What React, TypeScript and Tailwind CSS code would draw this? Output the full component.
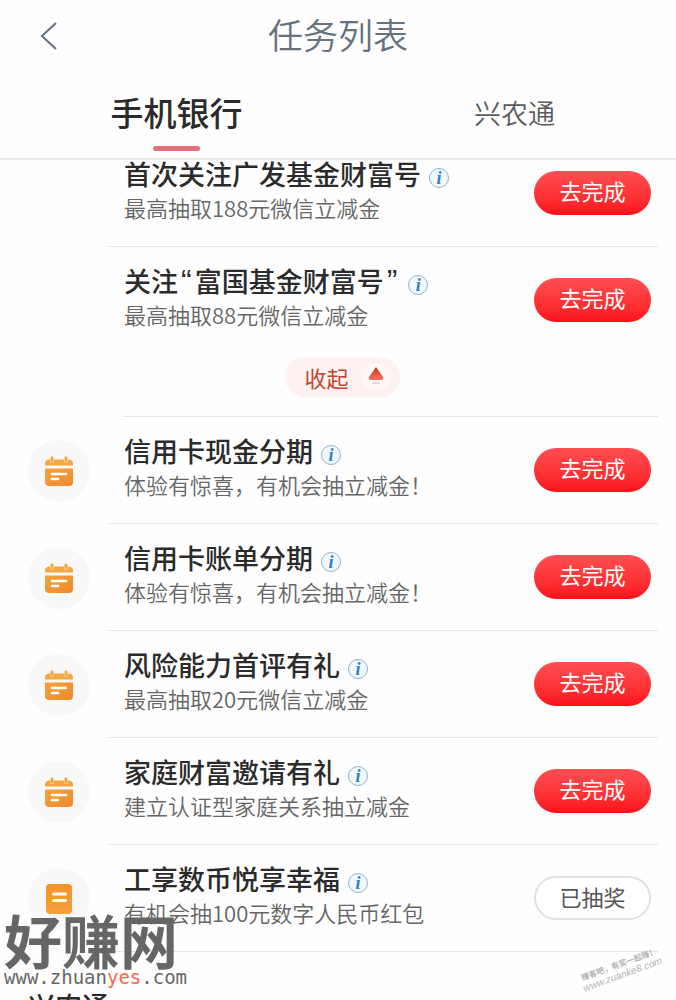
// Task list screen: header, tabs and the scrolling list of reward tasks.

interface Task {
  title: string
  desc: string
  icon?: 'calendar' | 'note'
  done?: boolean
}

const followTasks: Task[] = [
  { title: '首次关注广发基金财富号', desc: '最高抽取188元微信立减金' },
  { title: '关注“富国基金财富号”', desc: '最高抽取88元微信立减金' },
]

const tasks: Task[] = [
  { title: '信用卡现金分期', desc: '体验有惊喜，有机会抽立减金！', icon: 'calendar' },
  { title: '信用卡账单分期', desc: '体验有惊喜，有机会抽立减金！', icon: 'calendar' },
  { title: '风险能力首评有礼', desc: '最高抽取20元微信立减金', icon: 'calendar' },
  { title: '家庭财富邀请有礼', desc: '建立认证型家庭关系抽立减金', icon: 'calendar' },
  { title: '工享数币悦享幸福', desc: '有机会抽100元数字人民币红包', icon: 'note', done: true },
]

function CalendarIcon() {
  return (
    <svg width="30" height="30" viewBox="0 0 30 30" aria-hidden="true">
      <defs>
        <linearGradient id="cal" x1="0" y1="0" x2="1" y2="1">
          <stop offset="0" stopColor="#f6a23c" />
          <stop offset="1" stopColor="#ec8a2b" />
        </linearGradient>
      </defs>
      <path d="M1 9.500V8q0-4.500 4.500-4.500h19Q29 3.500 29 8v1.500z" fill="#f5a541" />
      <path d="M8 2v3M22 2v3" stroke="#fbdcae" strokeWidth="4" strokeLinecap="round" />
      <path d="M8 2v3M22 2v3" stroke="#f5a541" strokeWidth="2.500" strokeLinecap="round" />
      <path d="M1 12.500h28V26q0 4-4 4H5q-4 0-4-4z" fill="url(#cal)" />
      <path d="M8 18h14M8 23h6" stroke="#fff" strokeWidth="2.600" strokeLinecap="round" />
    </svg>
  )
}

function NoteIcon() {
  return (
    <svg width="28" height="30" viewBox="0 0 28 30" aria-hidden="true">
      <defs>
        <linearGradient id="note" x1="0" y1="0" x2="0" y2="1">
          <stop offset="0" stopColor="#f09328" />
          <stop offset="1" stopColor="#f7a13f" />
        </linearGradient>
      </defs>
      <rect x="1" y="0" width="26" height="30" rx="4" fill="url(#note)" />
      <path d="M8.500 10h12M8.500 16.500h12" stroke="#fff" strokeWidth="3" strokeLinecap="round" />
    </svg>
  )
}

function InfoButton({ title }: { title: string }) {
  return (
    <button
      type="button"
      aria-label={`${title} 说明`}
      className="mt-2 ml-2 flex size-5 shrink-0 items-center justify-center rounded-full border border-[#8fb4cf] bg-[#f1f9fe] font-['Liberation_Serif',serif] text-[18px] leading-none font-bold text-[#2f7fc2] italic"
    >
      i
    </button>
  )
}

// Curly quotes come out full width in the CJK face, so they get a Latin one.
function Title({ text }: { text: string }) {
  return (
    <h2 className="text-[27px] leading-[38px] font-medium whitespace-nowrap text-[#2b2b2b]">
      {text.split(/([“”])/).map((part, i) =>
        part === '“' || part === '”' ? (
          <span key={i} className="px-[3px] font-['Liberation_Sans',sans-serif] text-[32px] leading-none font-normal">
            {part}
          </span>
        ) : (
          part
        ),
      )}
    </h2>
  )
}

function TaskRow({ task, last = false }: { task: Task; last?: boolean }) {
  return (
    <li className="flex pr-[18px]">
      <div className="flex w-[109px] shrink-0 items-center pl-7">
        {task.icon && (
          <span className="flex size-[62px] items-center justify-center rounded-full bg-[#f8f8f8]">
            {task.icon === 'calendar' ? <CalendarIcon /> : <NoteIcon />}
          </span>
        )}
      </div>
      <div
        className={`flex min-w-0 flex-1 items-center justify-between border-b pr-[7px] pl-[15px] ${
          last ? 'border-transparent' : 'border-[#e4e4e4]'
        }`}
      >
        <div className="pt-[15px] pb-[25px]">
          <div className="flex items-center">
            <Title text={task.title} />
            <InfoButton title={task.title} />
          </div>
          <p className="text-[22px] leading-7 font-[350] whitespace-nowrap text-[#666]">{task.desc}</p>
        </div>
        {task.done ? (
          <button
            type="button"
            className="h-11 w-[117px] shrink-0 rounded-full border-2 border-[#e2e2e2] bg-white pb-1 text-[22px] text-[#555]"
          >
            已抽奖
          </button>
        ) : (
          <button
            type="button"
            className="h-11 w-[117px] shrink-0 rounded-full bg-linear-to-b from-[#ff4d52] to-[#fb0d18] pb-1.5 text-[22px] text-white"
          >
            去完成
          </button>
        )}
      </div>
    </li>
  )
}

export default function App() {
  return (
    <div className="relative flex h-screen flex-col overflow-hidden bg-[#fefefe] font-['Noto_Sans_CJK_SC',sans-serif]">
      <header className="grid h-[72px] shrink-0 grid-cols-[1fr_auto_1fr] items-center">
        <button type="button" aria-label="返回" className="ml-10 w-fit">
          <svg width="18" height="30" viewBox="0 0 18 30" fill="none" stroke="#65727e" strokeWidth="2">
            <path d="M16 2L2 15l14 13" />
          </svg>
        </button>
        <h1 className="pb-1 text-[35px] leading-[68px] font-[350] text-[#66727e]">任务列表</h1>
      </header>

      <nav className="grid h-[88px] shrink-0 grid-cols-2 border-b-2 border-[#e9e9e9] pl-2.5">
        <button type="button" className="flex flex-col items-center pt-4 text-[33px] leading-[48px] font-medium text-[#2b2b2b]">
          手机银行
          <span className="mt-2.5 h-[5px] w-[47px] rounded-full bg-[#e4717a]" />
        </button>
        <button type="button" className="flex flex-col items-center pt-4 pl-2.5 text-[27px] leading-[50px] font-[350] text-[#5c5c5c]">
          兴农通
        </button>
      </nav>

      <main className="flex-1 overflow-hidden">
        <ul className="-mt-5">
          {followTasks.map((task, i) => (
            <TaskRow key={task.title} task={task} last={i === followTasks.length - 1} />
          ))}
        </ul>
        <div className="mr-[18px] ml-[123px] border-b border-[#e4e4e4]">
          <div className="flex justify-center pt-[3px] pr-[97px] pb-[19px]">
            <button
              type="button"
              className="flex h-10 w-[115px] items-center justify-between rounded-full bg-[#fdf1f1] pr-2.5 pl-5 text-[22px] text-[#c2452d]"
            >
              收起
              <span className="flex size-7 items-center justify-center rounded-full bg-[#fef9f8]">
                <svg width="16" height="20" viewBox="0 0 16 20" aria-hidden="true">
                  <defs>
                    <linearGradient id="up" x1="0" y1="0" x2="0" y2="1">
                      <stop offset="0" stopColor="#cf3320" />
                      <stop offset="1" stopColor="#f4775c" />
                    </linearGradient>
                  </defs>
                  <path d="M8 0l7 10q1 3-2 3H3q-3 0-2-3z" fill="url(#up)" />
                  <path d="M5 16h6" stroke="#f6d0cc" strokeWidth="2" strokeLinecap="round" />
                </svg>
              </span>
            </button>
          </div>
        </div>
        <ul>
          {tasks.map((task) => (
            <TaskRow key={task.title} task={task} />
          ))}
        </ul>
        <h2 className="pt-[34px] pl-7 text-[27px] leading-10 font-medium text-[#2b2b2b]">兴农通</h2>
      </main>

      {/* site marks laid over the list */}
      <div className="absolute bottom-3.5 left-1 text-[#666]">
        <p className="text-[58px] leading-[46px] font-bold">好赚网</p>
        <p className="pt-1.5 font-['DejaVu_Sans_Mono',monospace] text-[19px] leading-[18px]">
          www.zhuan<span className="text-[#f26a4b]">yes</span>.com
        </p>
      </div>
      <div className="absolute right-3.5 bottom-5 -rotate-[20deg] text-center text-[#b5b5b5]">
        <p className="text-[8px] leading-[12px] font-bold">赚客吧，有奖一起赚！</p>
        <p className="font-['Liberation_Sans',sans-serif] text-[10px] leading-[10px] italic">www.zuanke8.com</p>
      </div>
    </div>
  )
}
